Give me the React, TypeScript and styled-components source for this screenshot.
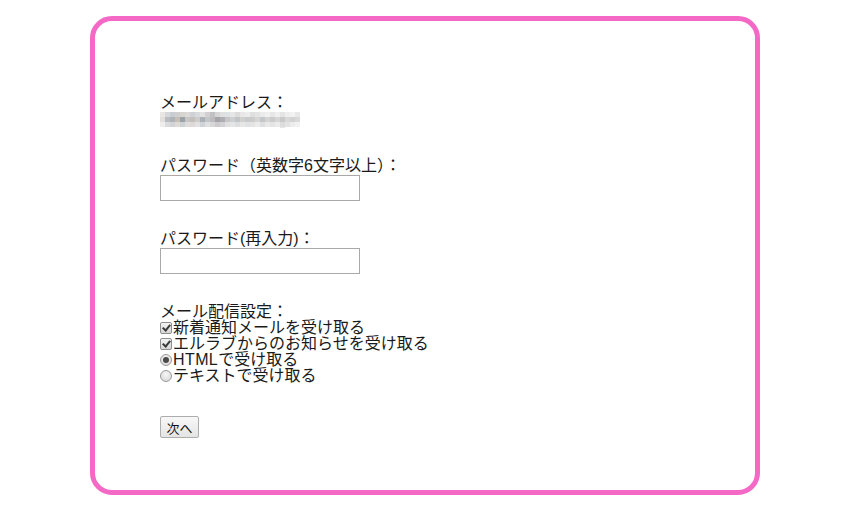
import React, { useState } from 'react';
import styled, { createGlobalStyle } from 'styled-components';

const GlobalStyle = createGlobalStyle`
  html, body {
    margin: 0;
    padding: 0;
    background: #ffffff;
  }
  body {
    font-family: "Liberation Sans", "Noto Sans CJK JP", sans-serif;
    color: #1a1a1a;
  }
`;

// mosaic shades for the blurred e-mail address
const mosaicRows = [
  ['#e9e6e4', '#d6d7da', '#c9ccd0', '#cfcfcf', '#d8d4d0', '#dcd9d6', '#cfd2d6', '#d9dadb', '#e2e2e2', '#d3cfd2', '#bfc1c5', '#d6d6d6', '#e0e0e0', '#dfe2e4', '#e6e6e6', '#dcdcdc', '#e8e8e8', '#ececec', '#e0dfdf', '#e4e4e4', '#ebebeb', '#f0f0f0', '#e7e7e7', '#efefef', '#e4e4e4', '#ededed', '#f2f2f2', '#e8e8e8'],
  ['#e3dfdc', '#b9bcc1', '#aeb3b8', '#c6c0b8', '#99a3a9', '#c8c6c4', '#c4c0bb', '#cfcccc', '#aab0b6', '#c3c6c8', '#bdbbbd', '#a7a4a8', '#aeadb2', '#c6c6c6', '#cdd0d2', '#c2c5c7', '#d0d0ce', '#c7cbcd', '#cccccc', '#d6d6d6', '#c3c7ca', '#d4d4d4', '#cbcbcb', '#d6d6d6', '#c9c9c9', '#d8d8d8', '#d2d2d2', '#d9d9d9'],
  ['#f0eeec', '#d9dbdd', '#d1d3d6', '#dedad6', '#cdd2d5', '#e0dedc', '#dcd9d6', '#e3e1e1', '#d0d3d7', '#dfe0e1', '#d8d7d8', '#cdcbcd', '#d3d2d5', '#e1e1e1', '#e4e5e6', '#dcdee0', '#e6e6e5', '#e0e2e3', '#e4e4e4', '#ebebeb', '#dde0e2', '#e9e9e9', '#e4e4e4', '#ebebeb', '#dddddd', '#e3e3e3', '#ececec', '#f1f1f1'],
];

function Mosaic() {
  return (
    <svg width="140" height="17" viewBox="0 0 140 17">
      {mosaicRows.map((row, r) =>
        row.map((c, i) => <rect key={r + '-' + i} x={i * 5} y={1 + r * 5} width="5" height="5" fill={c} />)
      )}
      <rect x="120" y="16" width="5" height="1" fill="#e6e6e6" />
    </svg>
  );
}

function App() {
  const [password, setPassword] = useState('');
  const [password2, setPassword2] = useState('');
  const [news, setNews] = useState(true);
  const [info, setInfo] = useState(true);
  const [format, setFormat] = useState('html');

  return (
    <>
      <GlobalStyle />
      <Frame>
        <Form onSubmit={(e) => { e.preventDefault(); }}>
          <Field>
            <Label>メールアドレス：</Label>
            <Mosaic />
          </Field>

          <Field>
            <Label htmlFor="password">パスワード（英数字6文字以上）：</Label>
            <TextInput id="password" type="password" value={password} onChange={(e) => setPassword(e.target.value)} />
          </Field>

          <Field>
            <Label htmlFor="password2">パスワード(再入力)：</Label>
            <TextInput id="password2" type="password" value={password2} onChange={(e) => setPassword2(e.target.value)} />
          </Field>

          <Field>
            <Label>メール配信設定：</Label>
            <Option>
              <CheckBox type="checkbox" checked={news} onChange={(e) => setNews(e.target.checked)} />
              新着通知メールを受け取る
            </Option>
            <Option>
              <CheckBox type="checkbox" checked={info} onChange={(e) => setInfo(e.target.checked)} />
              エルラブからのお知らせを受け取る
            </Option>
            <Option>
              <Radio type="radio" name="format" checked={format === 'html'} onChange={() => setFormat('html')} />
              <Latin>HTML</Latin>で受け取る
            </Option>
            <Option>
              <Radio type="radio" name="format" checked={format === 'text'} onChange={() => setFormat('text')} />
              テキストで受け取る
            </Option>
          </Field>

          <NextButton type="submit">次へ</NextButton>
        </Form>
      </Frame>
    </>
  );
}

export default App;

const Frame = styled.div`
  box-sizing: border-box;
  width: 670px;
  height: 479px;
  margin: 16px auto 0;
  border: 5px solid #f468c6;
  border-radius: 22px;
  padding: 74px 0 0 65px;
`;

const Form = styled.form`
  display: flex;
  flex-direction: column;
  align-items: flex-start;
  font-size: 16px;
  line-height: 16px;
`;

const Field = styled.div`
  display: flex;
  flex-direction: column;
  align-items: flex-start;
  margin-bottom: 30px;
`;

const Label = styled.label`
  display: block;
  height: 16px;
`;

const TextInput = styled.input`
  box-sizing: border-box;
  width: 200px;
  height: 26px;
  margin: 1px 0 0;
  border: 1px solid #a9a9a9;
  padding: 2px 4px;
  font-size: 14px;
`;

const Option = styled.label`
  display: flex;
  align-items: center;
  height: 16px;
`;

const Latin = styled.span`
  letter-spacing: 0.4px;
`;

const CheckBox = styled.input`
  appearance: none;
  position: relative;
  box-sizing: border-box;
  width: 12px;
  height: 12px;
  margin: 0 1px 0 0;
  border: 1px solid #8e8e8e;
  border-radius: 2px;
  background: linear-gradient(#f4f4f4, #d6d6d6);

  &:checked::after {
    content: '';
    position: absolute;
    left: 3px;
    top: 0px;
    width: 3px;
    height: 6px;
    border: solid #3a3a3a;
    border-width: 0 2px 2px 0;
    transform: rotate(40deg);
  }
`;

const Radio = styled.input`
  appearance: none;
  position: relative;
  box-sizing: border-box;
  width: 12px;
  height: 12px;
  margin: 0 1px 0 0;
  border: 1px solid #9a9a9a;
  border-radius: 50%;
  background: radial-gradient(circle at 50% 35%, #f6f6f6, #d4d4d4);

  &:checked::after {
    content: '';
    position: absolute;
    left: 2px;
    top: 2px;
    width: 6px;
    height: 6px;
    border-radius: 50%;
    background: #4a4a4a;
  }
`;

const NextButton = styled.button`
  box-sizing: border-box;
  height: 22px;
  width: 39px;
  margin-top: 2px;
  padding: 0;
  font-family: "Liberation Sans", "Noto Sans CJK JP", sans-serif;
  font-size: 13px;
  color: #111;
  border: 1px solid #adadad;
  border-radius: 2px;
  background: linear-gradient(#f8f8f8, #e4e4e4);
`;
